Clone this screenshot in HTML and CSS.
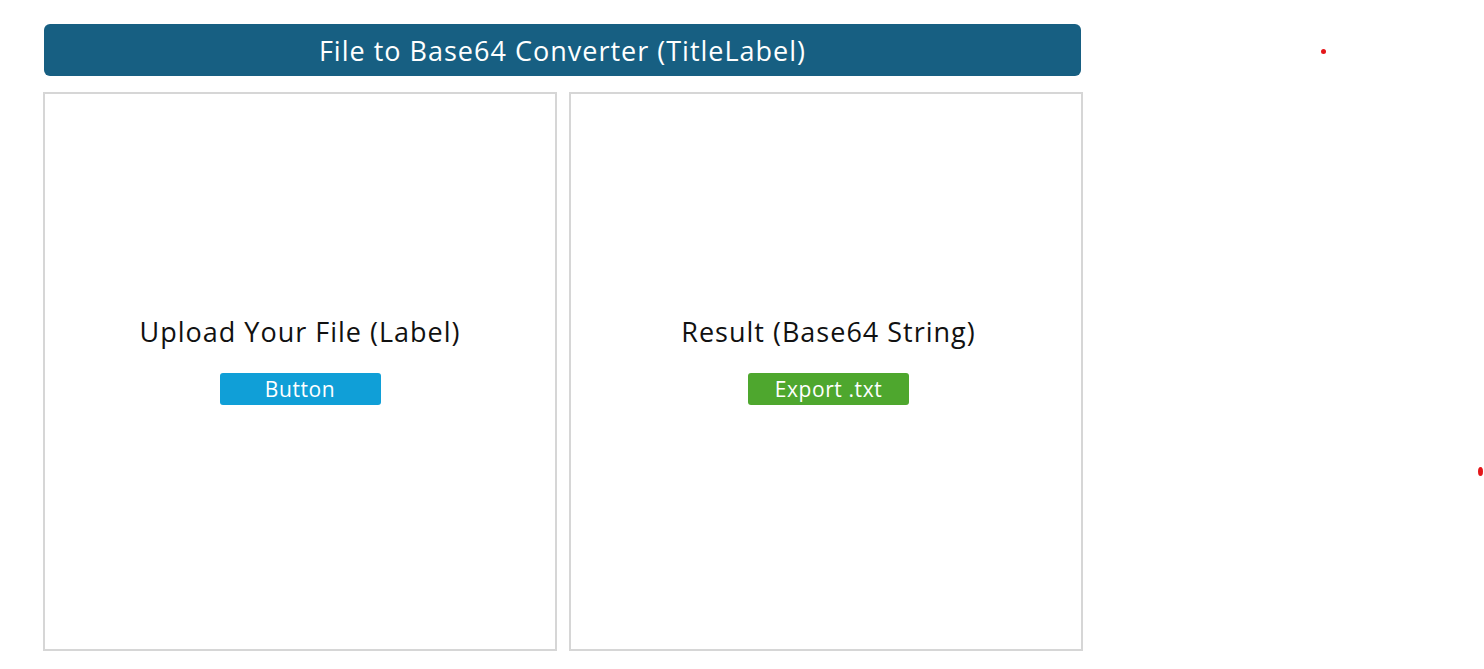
FILE: index.html
```html
<!DOCTYPE html>
<html>
<head>
<meta charset="utf-8">
<link rel="stylesheet" href="styles.css">
</head>
<body>
<div class="app">
  <div class="title">File to Base64 Converter (TitleLabel)</div>
  <div class="panels">
    <div class="panel">
      <div class="label">Upload Your File (Label)</div>
      <div class="btn btn-blue">Button</div>
    </div>
    <div class="panel panel-right">
      <div class="label">Result (Base64 String)</div>
      <div class="btn btn-green">Export .txt</div>
    </div>
  </div>
</div>
<span class="dot dot1"></span>
<span class="dot dot2"></span>
</body>
</html>
```
FILE: styles.css
```css
html, body {
  margin: 0;
  padding: 0;
  background: #ffffff;
  font-family: "Open Sans", "Noto Sans", sans-serif;
}
.app {
  width: 1040px;
  padding: 24px 0 0 43px;
}
.title {
  margin: 0 2px 0 1px;
  height: 52px;
  background: #175f82;
  color: #ffffff;
  border-radius: 6px;
  font-size: 27px;
  letter-spacing: 1px;
  display: flex;
  align-items: center;
  justify-content: center;
}
.panels {
  display: flex;
  gap: 12px;
  margin-top: 16px;
}
.panel {
  flex: 0 0 510px;
  box-sizing: content-box;
  height: 555px;
  border: 2px solid #d6d6d6;
  display: flex;
  flex-direction: column;
  align-items: center;
  justify-content: center;
}
.panel-right {
  flex-basis: 505px;
  padding-left: 5px;
}
.label {
  font-size: 27px;
  letter-spacing: 1px;
  color: #111111;
  margin-top: -25px;
  line-height: 36px;
}
.btn {
  margin-top: 23px;
  width: 161px;
  height: 32px;
  border-radius: 3px;
  color: #ffffff;
  font-size: 21px;
  letter-spacing: 0.6px;
  display: flex;
  align-items: center;
  justify-content: center;
}
.btn-blue { background: #109fd7; }
.btn-green { background: #4ea72e; }
.dot {
  position: absolute;
  background: #e4161a;
  border-radius: 50%;
}
.dot1 { left: 1321px; top: 49px; width: 5px; height: 5px; }
.dot2 { left: 1478px; top: 467px; width: 5px; height: 9px; }
```
